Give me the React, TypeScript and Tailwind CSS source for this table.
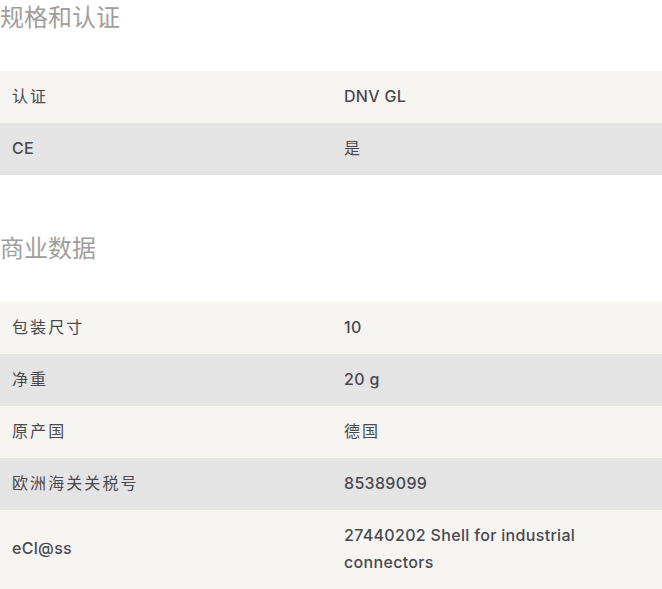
const SECTIONS: Array<{ title: string; rows: Array<[string, string]> }> = [
  {
    title: "规格和认证",
    rows: [
      ["认证", "DNV GL"],
      ["CE", "是"],
    ],
  },
  {
    title: "商业数据",
    rows: [
      ["包装尺寸", "10"],
      ["净重", "20 g"],
      ["原产国", "德国"],
      ["欧洲海关关税号", "85389099"],
      ["eCl@ss", "27440202 Shell for industrial connectors"],
    ],
  },
];

// CJK cells render lighter and wider than latin ones in the reference
const cellText = (t: string) =>
  /[\u4e00-\u9fff]/.test(t) ? "font-normal text-[16px] tracking-[0.13em]" : "font-medium text-[16px] tracking-[0.02em]";

export default function App() {
  return (
    <div className="bg-white font-['Inter','Noto_Sans_CJK_SC',sans-serif] w-[662px]">
      {SECTIONS.map((s, i) => (
        <section key={s.title} className={i > 0 ? "mt-[56px]" : ""}>
          <h2 className="text-2xl leading-9 text-[#a09e9b] mb-[35px]">{s.title}</h2>
          <div>
            {s.rows.map(([label, value], j) => (
              <div
                key={label}
                className={`grid grid-cols-2 items-center leading-[27px] text-[#4a4950] ${
                  j % 2 === 0 ? "bg-[#f6f5f2]" : "bg-[#e4e4e4]"
                }`}
              >
                <div className={`px-3 pt-[11.5px] pb-[13.5px] ${cellText(label)}`}>{label}</div>
                <div className={`pl-[13px] pr-3 pt-[11.5px] pb-[13.5px] ${cellText(value)}`}>{value}</div>
              </div>
            ))}
          </div>
        </section>
      ))}
    </div>
  );
}
